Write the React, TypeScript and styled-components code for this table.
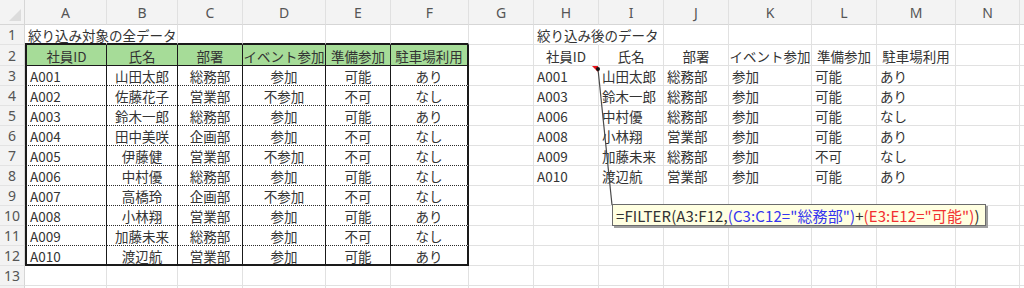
import React from 'react'
import styled, { createGlobalStyle } from 'styled-components'

const GlobalStyle = createGlobalStyle`
  html, body {
    margin: 0;
    padding: 0;
    background: #ffffff;
  }
  body {
    font-family: "Noto Sans CJK JP", "Noto Sans", sans-serif;
    overflow: hidden;
  }
`

type Align = 'left' | 'center'

interface ColDef {
  key: string
  w: number
}

const COLS: ColDef[] = [
  { key: 'A', w: 82 },
  { key: 'B', w: 71 },
  { key: 'C', w: 65 },
  { key: 'D', w: 83 },
  { key: 'E', w: 65 },
  { key: 'F', w: 78 },
  { key: 'G', w: 65 },
  { key: 'H', w: 65 },
  { key: 'I', w: 65 },
  { key: 'J', w: 65 },
  { key: 'K', w: 83 },
  { key: 'L', w: 65 },
  { key: 'M', w: 79 },
  { key: 'N', w: 64 },
  { key: '', w: 64 },
]

const GRID = '1px solid #e1e1e1'
const THICK = '2px solid #1a1a1a'
const THIN = '1px solid #1a1a1a'
const DOTS = '1px dotted #2a2a2a'

const HEADERS = ['社員ID', '氏名', '部署', 'イベント参加', '準備参加', '駐車場利用']

const ALL_ROWS = [
  ['A001', '山田太郎', '総務部', '参加', '可能', 'あり'],
  ['A002', '佐藤花子', '営業部', '不参加', '不可', 'なし'],
  ['A003', '鈴木一郎', '総務部', '参加', '可能', 'あり'],
  ['A004', '田中美咲', '企画部', '参加', '不可', 'なし'],
  ['A005', '伊藤健', '営業部', '不参加', '不可', 'なし'],
  ['A006', '中村優', '総務部', '参加', '可能', 'なし'],
  ['A007', '高橋玲', '企画部', '不参加', '不可', 'なし'],
  ['A008', '小林翔', '営業部', '参加', '可能', 'あり'],
  ['A009', '加藤未来', '総務部', '参加', '不可', 'なし'],
  ['A010', '渡辺航', '営業部', '参加', '可能', 'あり'],
]

const FILTERED = ALL_ROWS.filter(r => r[2] === '総務部' || r[4] === '可能')

const Sheet = styled.div`
  position: relative;
  width: 1024px;
  height: 288px;
  overflow: hidden;
  display: flex;
  flex-direction: column;
  color: #333333;
  font-size: 13.5px;
`

const Row = styled.div<{ $h: number }>`
  display: flex;
  height: ${p => p.$h}px;
  flex: none;
`

const Corner = styled.div`
  position: relative;
  width: 25px;
  flex: none;
  background: #f3f3f3;
  border-right: 1px solid #d6d6d6;
  border-bottom: 1px solid #d6d6d6;
  box-sizing: border-box;

  &::after {
    content: '';
    position: absolute;
    right: 3px;
    bottom: 3px;
    border-style: solid;
    border-width: 0 0 12px 12px;
    border-color: transparent transparent #dcdcdc transparent;
  }
`

const ColHead = styled.div<{ $w: number }>`
  width: ${p => p.$w}px;
  flex: none;
  box-sizing: border-box;
  background: #f3f3f3;
  border-right: 1px solid #e0e0e0;
  border-bottom: 1px solid #d6d6d6;
  display: flex;
  align-items: center;
  justify-content: center;
  font-family: "Noto Sans", "Liberation Sans", sans-serif;
  font-size: 14px;
  color: #555555;
  padding-top: 1px;
`

const RowHead = styled.div`
  width: 25px;
  flex: none;
  box-sizing: border-box;
  background: #f3f3f3;
  border-right: 1px solid #d6d6d6;
  border-bottom: 1px solid #e3e3e3;
  display: flex;
  align-items: center;
  justify-content: center;
  font-family: "Noto Sans", "Liberation Sans", sans-serif;
  font-size: 14px;
  color: #555555;
`

interface CellProps {
  $w: number
  $align?: Align
  $fill?: string
  $left?: string
  $right?: string
  $bottom?: string
}

const Cell = styled.div<CellProps>`
  position: relative;
  width: ${p => p.$w}px;
  flex: none;
  box-sizing: border-box;
  background: ${p => p.$fill || 'transparent'};
  border-left: ${p => p.$left || 'none'};
  border-right: ${p => p.$right || GRID};
  border-bottom: ${p => p.$bottom || GRID};
  display: flex;
  align-items: center;
  justify-content: ${p => (p.$align === 'center' ? 'center' : 'flex-start')};
  padding: 1px 3px 0;
  white-space: nowrap;
  overflow: visible;
`

const CommentMark = styled.span`
  position: absolute;
  top: 0;
  right: 0;
  border-style: solid;
  border-width: 0 6px 6px 0;
  border-color: transparent #e8141b transparent transparent;
`

const Leader = styled.svg`
  position: absolute;
  left: 0;
  top: 0;
  pointer-events: none;
`

const FormulaTip = styled.div`
  position: absolute;
  left: 612px;
  top: 204px;
  width: 374px;
  height: 22px;
  box-sizing: border-box;
  background: #ffffe1;
  border: 1px solid #6b6b6b;
  box-shadow: 2px 2px 0 #a0a0a0;
  display: flex;
  align-items: center;
  padding: 0 3px;
  font-size: 15px;
  letter-spacing: 0.1px;
  color: #333333;
  white-space: nowrap;
`

const Part = styled.span<{ $tone: 'blue' | 'red' }>`
  color: ${p => (p.$tone === 'blue' ? '#3535f0' : '#f23030')};
`

// borders for the framed source table (A2:F12)
function frame(rowIdx: number, colIdx: number): Partial<CellProps> {
  // rowIdx: 1 = sheet row 1, 2 = header row, 3..12 = data
  const out: Partial<CellProps> = {}
  if (rowIdx === 1 && colIdx <= 5) out.$bottom = THICK
  if (rowIdx >= 2 && rowIdx <= 12 && colIdx <= 5) {
    if (colIdx === 0) out.$left = THICK
    out.$right = colIdx === 5 ? THICK : THIN
    if (rowIdx === 2) out.$bottom = THIN
    else if (rowIdx === 12) out.$bottom = THICK
    else out.$bottom = DOTS
    if (rowIdx === 2) out.$fill = '#a6dc98'
  }
  return out
}

function cellContent(rowIdx: number, colIdx: number): { text: string; align: Align } {
  if (rowIdx === 1) {
    if (colIdx === 0) return { text: '絞り込み対象の全データ', align: 'left' }
    if (colIdx === 7) return { text: '絞り込み後のデータ', align: 'left' }
    return { text: '', align: 'left' }
  }
  if (rowIdx === 2) {
    if (colIdx <= 5) return { text: HEADERS[colIdx], align: 'center' }
    if (colIdx >= 7 && colIdx <= 12) return { text: HEADERS[colIdx - 7], align: 'center' }
    return { text: '', align: 'left' }
  }
  const d = rowIdx - 3
  if (colIdx <= 5 && ALL_ROWS[d]) {
    return { text: ALL_ROWS[d][colIdx], align: colIdx === 0 ? 'left' : 'center' }
  }
  if (colIdx >= 7 && colIdx <= 12 && FILTERED[d]) {
    return { text: FILTERED[d][colIdx - 7], align: 'left' }
  }
  return { text: '', align: 'left' }
}

const ROW_HEIGHTS: Record<number, number> = { 1: 20, 2: 21 }

export default function App() {
  const rows = Array.from({ length: 14 }, (_, i) => i + 1)

  return (
    <>
      <GlobalStyle />
      <Sheet>
        <Row $h={25}>
          <Corner />
          {COLS.map((c, i) => (
            <ColHead key={i} $w={c.w}>{c.key}</ColHead>
          ))}
        </Row>
        {rows.map(r => (
          <Row key={r} $h={ROW_HEIGHTS[r] || 20}>
            {/* row 14 is only a sliver at the bottom edge */}
            <RowHead>{r < 14 ? r : ''}</RowHead>
            {COLS.map((c, ci) => {
              const { text, align } = cellContent(r, ci)
              const f = frame(r, ci)
              // title text spills over into the next cell, Excel hides that gridline
              const spill = r === 1 && (ci === 0 || ci === 7)
              return (
                <Cell
                  key={ci}
                  $w={c.w}
                  $align={align}
                  $fill={f.$fill}
                  $left={f.$left}
                  $right={spill ? '1px solid transparent' : f.$right}
                  $bottom={f.$bottom}
                >
                  {text}
                  {r === 3 && ci === 7 && <CommentMark />}
                </Cell>
              )
            })}
          </Row>
        ))}

        <Leader width={1024} height={288}>
          <line x1={598} y1={69} x2={612} y2={205} stroke="#4a4a4a" strokeWidth={1.2} />
          <circle cx={598} cy={69} r={2} fill="#111" />
        </Leader>

        <FormulaTip>
          =FILTER(A3:F12,<Part $tone="blue">(C3:C12="総務部")</Part>+<Part $tone="red">(E3:E12="可能")</Part>)
        </FormulaTip>
      </Sheet>
    </>
  )
}
